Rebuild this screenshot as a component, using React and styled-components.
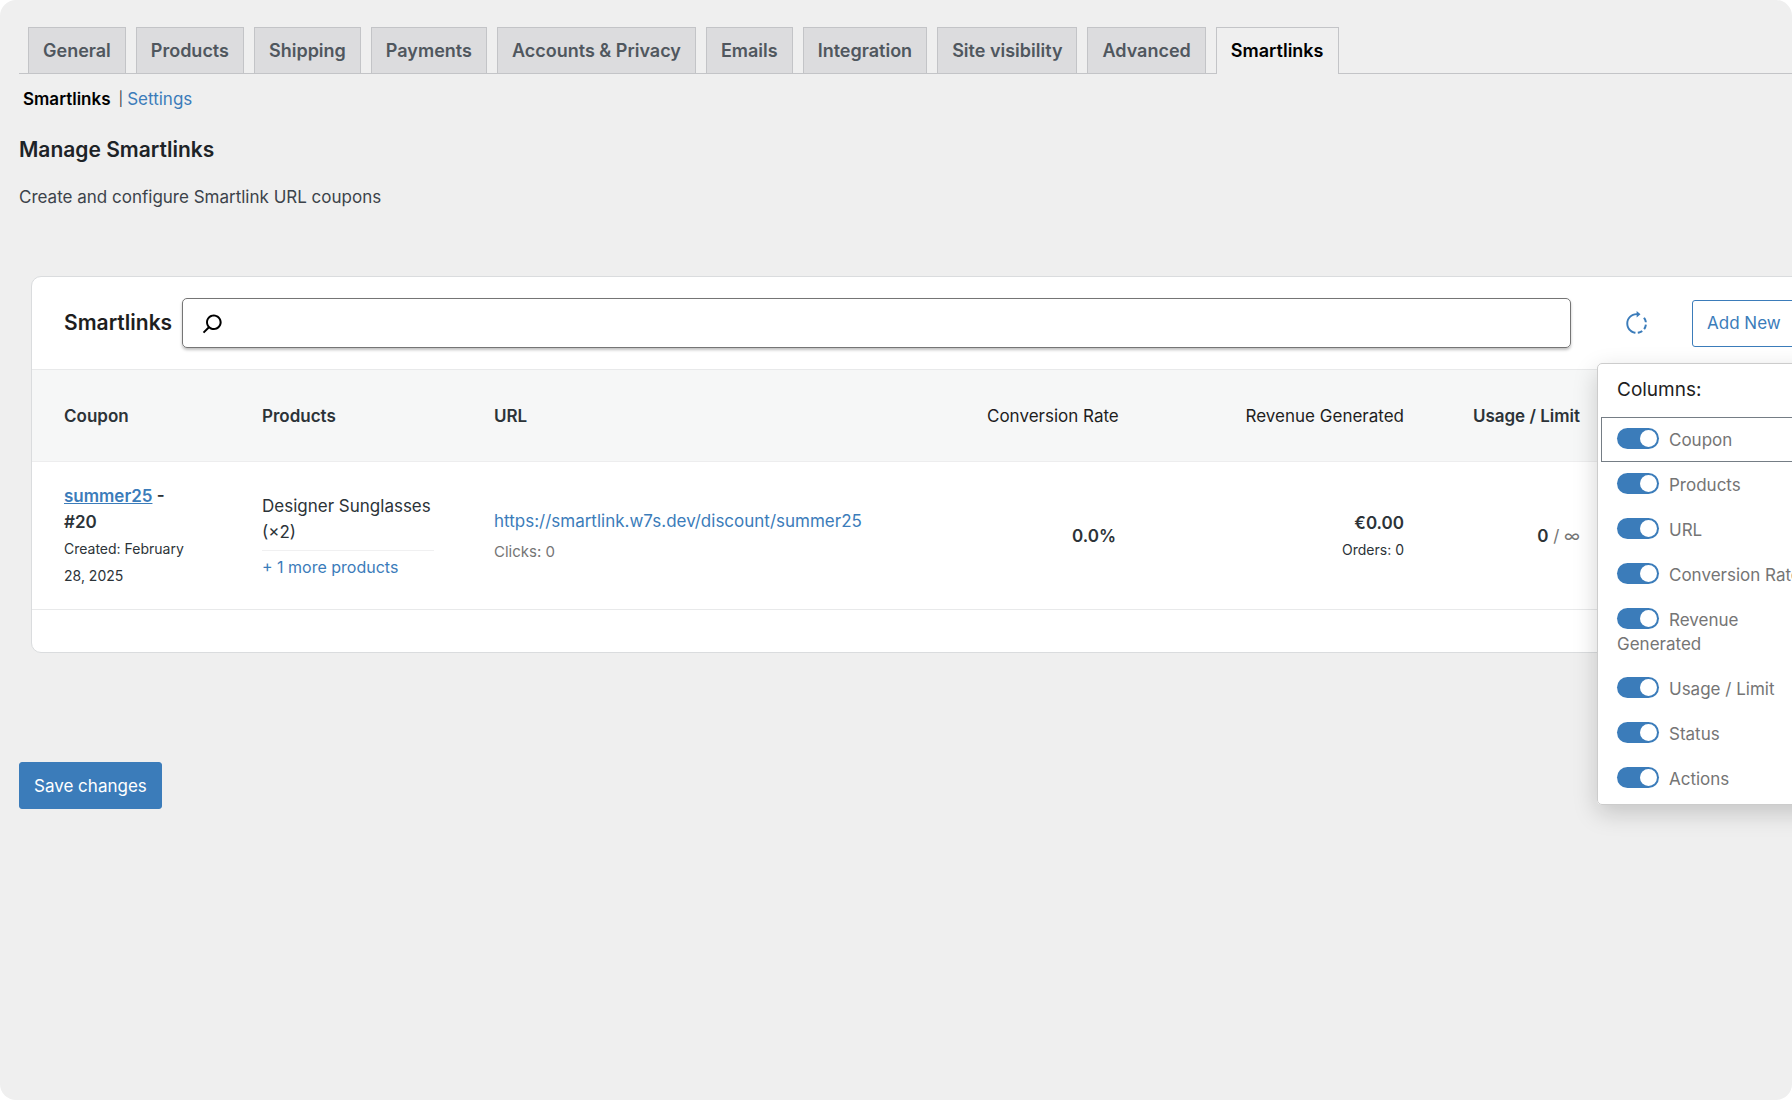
import React, { useState } from "react";
import styled, { createGlobalStyle } from "styled-components";

const GlobalStyle = createGlobalStyle`
  * {
    box-sizing: border-box;
  }
  body {
    margin: 0;
    background-color: #fff;
    color: #3c434a;
    font: 17px/26px Inter, "Liberation Sans", sans-serif;
  }
  a {
    color: #3b7cba;
    text-decoration: none;
  }
  b {
    font-weight: 600;
  }
  button,
  input {
    font: inherit;
  }
`;

const Page = styled.div`
  min-height: 100vh;
  padding: 27px 0 32px 19px;
  border-radius: 16px;
  background-color: #efefef;
  overflow: hidden;
`;
const Tabs = styled.nav`
  display: flex;
  gap: 10px;
  padding-left: 9px;
  border-bottom: 1px solid #c3c4c7;
`;
const Tab = styled.a`
  height: ${(props) => (props.$active ? "47px" : "46px")};
  padding: 0 14px;
  border: 1px solid #c3c4c7;
  border-bottom: none;
  background-color: ${(props) => (props.$active ? "#efefef" : "#dcdcde")};
  color: ${(props) => (props.$active ? "#000" : "#50575e")};
  margin-bottom: ${(props) => (props.$active ? "-1px" : "0")};
  font-size: 18px;
  font-weight: 600;
  line-height: 46px;
  white-space: nowrap;
`;
const SubNav = styled.nav`
  display: flex;
  gap: 4px;
  padding: 12px 4px 0;
  & > a:first-child {
    margin-right: 4px;
    color: #000;
    font-weight: 600;
  }
  & > span {
    font-size: 14px;
  }
`;
const Title = styled.h2`
  margin: 23px 0 0;
  color: #1d2327;
  font-size: 21px;
  font-weight: 600;
  line-height: 30px;
`;
const Description = styled.p`
  margin: 19px 0 66px;
`;

const Card = styled.section`
  position: relative;
  margin: 0 -80px 0 12px;
  border: 1px solid #dadcde;
  border-radius: 10px;
  background-color: #fff;
`;
const CardHeader = styled.div`
  display: flex;
  align-items: center;
  height: 92px;
  padding: 0 32px;
  & > h3 {
    margin: 0 10px 0 0;
    color: #1e1e1e;
    font-size: 21px;
    font-weight: 600;
  }
`;
const SearchBox = styled.label`
  flex: 1;
  display: flex;
  align-items: center;
  height: 50px;
  padding: 0 14px;
  border: 1px solid #757575;
  border-radius: 5px;
  box-shadow: 0 2px 3px rgba(0, 0, 0, 0.25);
  & > input {
    flex: 1;
    border: none;
    outline: none;
    background: none;
  }
`;
const IconButton = styled.button`
  display: flex;
  align-items: center;
  justify-content: center;
  width: 47px;
  height: 47px;
  padding: 0;
  border: none;
  background: none;
  color: #3b7cba;
  cursor: pointer;
`;
const Actions = styled.div`
  display: flex;
  align-items: center;
  gap: 32px;
  width: 226px;
  margin-left: 42px;
`;
const Button = styled.button`
  height: 47px;
  padding: 0 14px;
  border: 1px solid #3b7cba;
  border-radius: 3px;
  background-color: ${(props) => (props.$primary ? "#3b7cba" : "#fff")};
  color: ${(props) => (props.$primary ? "#fff" : "#3b7cba")};
  white-space: nowrap;
  cursor: pointer;
`;

const Table = styled.table`
  width: 100%;
  table-layout: fixed;
  border-collapse: collapse;
  & th:first-child,
  & td:first-child {
    padding-left: 32px;
  }
`;
const HeadCell = styled.th`
  width: ${(props) => props.$width};
  height: 92px;
  padding: 0 30px;
  border-top: 1px solid #e8e9ea;
  border-bottom: 1px solid #ededee;
  background-color: #f6f7f7;
  color: ${(props) => (props.$sortable ? "#1e1e1e" : "#2c3338")};
  font-weight: ${(props) => (props.$sortable ? 400 : 600)};
  text-align: ${(props) => props.$align || "left"};
  white-space: nowrap;
`;
const Cell = styled.td`
  padding: 21px 30px 20px;
  border-bottom: 1px solid #e8e9ea;
  color: #2c3338;
  text-align: ${(props) => props.$align || "left"};
`;
const CouponName = styled.div`
  max-width: 120px;
  font-weight: 600;
  & > a {
    text-decoration: underline;
  }
`;
const Small = styled.div`
  font-size: 14px;
  line-height: 27px;
`;
const ProductName = styled.div`
  padding-bottom: 5px;
  margin-bottom: 3px;
  border-bottom: 1px solid #f0f0f1;
`;
const MoreLink = styled.a`
  font-size: 16px;
  white-space: nowrap;
`;
const Clicks = styled.div`
  margin-top: 5px;
  color: #757575;
  font-size: 15px;
`;
const Muted = styled.span`
  color: #757575;
`;
const CardFooter = styled.div`
  height: 42px;
`;

const Menu = styled.fieldset`
  position: absolute;
  top: 86px;
  right: 42px;
  width: 232px;
  margin: 0;
  padding: 0 3px;
  border: 1px solid #ccc;
  border-radius: 5px;
  background-color: #fff;
  box-shadow: 0 8px 24px rgba(0, 0, 0, 0.18);
`;
const MenuTitle = styled.div`
  padding: 13px 16px 14px;
  color: #1e1e1e;
  font-size: 19px;
`;
const MenuItem = styled.label`
  display: block;
  padding: 10px 15px 9px;
  border: 1px solid ${(props) => (props.$focused ? "#757d85" : "transparent")};
  color: #757575;
  line-height: 24px;
  cursor: pointer;
  &:last-child {
    padding-bottom: 12px;
  }
`;
const Toggle = styled.input`
  appearance: none;
  width: 42px;
  height: 21px;
  margin: 0 10px 0 0;
  padding: 2px;
  border-radius: 11px;
  background-color: ${(props) => (props.checked ? "#3b7cba" : "#949494")};
  vertical-align: -3px;
  cursor: pointer;
  &::before {
    content: "";
    display: block;
    width: 17px;
    height: 17px;
    margin-left: ${(props) => (props.checked ? "21px" : "0")};
    border-radius: 50%;
    background-color: #fff;
  }
`;
const SaveRow = styled.div`
  margin-top: 109px;
`;

const tabs = [
  "General",
  "Products",
  "Shipping",
  "Payments",
  "Accounts & Privacy",
  "Emails",
  "Integration",
  "Site visibility",
  "Advanced",
  "Smartlinks",
];

const columns = [
  "Coupon",
  "Products",
  "URL",
  "Conversion Rate",
  "Revenue Generated",
  "Usage / Limit",
  "Status",
  "Actions",
];

const SearchIcon = () => (
  <svg width="31" height="31" viewBox="0 0 24 24" aria-hidden="true">
    <path d="M13 5c-3.3 0-6 2.7-6 6 0 1.4.5 2.7 1.3 3.7l-3.8 3.8 1.1 1.1 3.8-3.8c1 .8 2.3 1.3 3.7 1.3 3.3 0 6-2.7 6-6S16.3 5 13 5zm0 10.5c-2.5 0-4.5-2-4.5-4.5s2-4.5 4.5-4.5 4.5 2 4.5 4.5-2 4.5-4.5 4.5z" />
  </svg>
);

const RefreshIcon = () => (
  <svg width="31" height="31" viewBox="0 0 24 24" fill="currentColor" aria-hidden="true">
    <path d="M15.1 4.8l-3-2.5V4c-4.4 0-8 3.6-8 8 0 3.7 2.5 6.9 6 7.7.3.1.6.1 1 .2l.2-1.5c-.4 0-.7-.1-1.1-.2l-.1.2v-.2c-2.6-.8-4.5-3.3-4.5-6.2 0-3.6 2.9-6.5 6.5-6.5v1.8l3-2.5zM20 11c-.2-1.4-.7-2.7-1.6-3.8l-1.2.8c.7.9 1.1 2 1.3 3.1L20 11zm-1.5 1.8c-.1.5-.2 1.1-.4 1.6s-.5 1-.8 1.5l1.2.9c.4-.5.8-1.1 1-1.8s.5-1.3.5-2l-1.5-.2zm-5.6 5.6l.2 1.5c1.4-.2 2.7-.7 3.8-1.6l-.9-1.1c-.9.7-2 1.1-3.1 1.2z" />
  </svg>
);

const App = () => {
  const [search, setSearch] = useState("");
  const [hidden, setHidden] = useState([]);

  const toggleColumn = (name) => {
    setHidden(
      hidden.includes(name)
        ? hidden.filter((item) => item !== name)
        : [...hidden, name]
    );
  };

  return (
    <>
      <GlobalStyle />
      <Page>
        <Tabs>
          {tabs.map((tab) => (
            <Tab key={tab} href="#" $active={tab === "Smartlinks"}>
              {tab}
            </Tab>
          ))}
        </Tabs>
        <SubNav>
          <a href="#">Smartlinks</a>
          <span>|</span>
          <a href="#">Settings</a>
        </SubNav>
        <Title>Manage Smartlinks</Title>
        <Description>Create and configure Smartlink URL coupons</Description>

        <Card>
          <CardHeader>
            <h3>Smartlinks</h3>
            <SearchBox>
              <SearchIcon />
              <input
                type="text"
                aria-label="Search"
                value={search}
                onChange={(e) => setSearch(e.target.value)}
              />
            </SearchBox>
            <Actions>
              <IconButton type="button" aria-label="Refresh">
                <RefreshIcon />
              </IconButton>
              <Button type="button">Add New</Button>
            </Actions>
          </CardHeader>
          <Table>
            <thead>
              <tr>
                <HeadCell $width="200px">Coupon</HeadCell>
                <HeadCell $width="232px">Products</HeadCell>
                <HeadCell>URL</HeadCell>
                <HeadCell $width="189px" $align="right" $sortable>
                  Conversion Rate
                </HeadCell>
                <HeadCell $width="288px" $align="right" $sortable>
                  Revenue Generated
                </HeadCell>
                <HeadCell $width="176px" $align="right">
                  Usage / Limit
                </HeadCell>
                <HeadCell $width="261px" />
              </tr>
            </thead>
            <tbody>
              <tr>
                <Cell>
                  <CouponName>
                    <a href="#">summer25</a> - #20
                  </CouponName>
                  <Small>Created: February 28, 2025</Small>
                </Cell>
                <Cell>
                  <ProductName>Designer Sunglasses (×2)</ProductName>
                  <MoreLink href="#">+ 1 more products</MoreLink>
                </Cell>
                <Cell>
                  <a href="#">https://smartlink.w7s.dev/discount/summer25</a>
                  <Clicks>Clicks: 0</Clicks>
                </Cell>
                <Cell $align="right">
                  <b>0.0%</b>
                </Cell>
                <Cell $align="right">
                  <b>€0.00</b>
                  <Small>Orders: 0</Small>
                </Cell>
                <Cell $align="right">
                  <b>0</b> <Muted>/ ∞</Muted>
                </Cell>
                <Cell />
              </tr>
            </tbody>
          </Table>
          <CardFooter />
          <Menu aria-label="Columns">
            <MenuTitle>Columns:</MenuTitle>
            {columns.map((name) => (
              <MenuItem key={name} $focused={name === "Coupon"}>
                <Toggle
                  type="checkbox"
                  checked={!hidden.includes(name)}
                  onChange={() => toggleColumn(name)}
                />
                {name}
              </MenuItem>
            ))}
          </Menu>
        </Card>

        <SaveRow>
          <Button type="button" $primary>
            Save changes
          </Button>
        </SaveRow>
      </Page>
    </>
  );
};

export default App;
